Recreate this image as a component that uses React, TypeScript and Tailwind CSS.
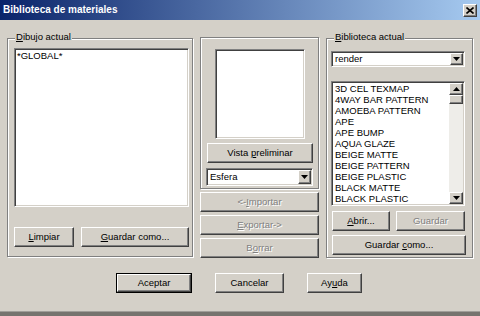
import React from "react";

const raised =
  "border border-t-white border-l-white border-r-[#404040] border-b-[#404040] shadow-[inset_-1px_-1px_0_#808080,inset_1px_1px_0_#d4d0c8] bg-[#d4d0c8]";
const sunken =
  "border border-t-[#808080] border-l-[#808080] border-r-white border-b-white shadow-[inset_1px_1px_0_#404040,inset_-1px_-1px_0_#d4d0c8]";
const etched = "border border-[#808080] shadow-[inset_1px_1px_0_#fff,1px_1px_0_#fff]";

function U({ children }: { children: React.ReactNode }) {
  return <span className="underline underline-offset-[1px]">{children}</span>;
}

function Btn({
  children,
  className = "",
  disabled = false,
}: {
  children: React.ReactNode;
  className?: string;
  disabled?: boolean;
}) {
  return (
    <div
      className={`${raised} flex items-center justify-center ${
        disabled ? "text-[#808080] [text-shadow:1px_1px_0_#fff]" : "text-black"
      } ${className}`}
    >
      <span className="whitespace-pre leading-none">{children}</span>
    </div>
  );
}

function DownTri() {
  return (
    <svg width="7" height="4" viewBox="0 0 7 4">
      <path d="M0 0h7L3.5 4z" fill="#000" />
    </svg>
  );
}
function UpTri() {
  return (
    <svg width="7" height="4" viewBox="0 0 7 4">
      <path d="M0 4h7L3.5 0z" fill="#000" />
    </svg>
  );
}

function Combo({ value, className = "" }: { value: string; className?: string }) {
  return (
    <div className={`${sunken} bg-white flex items-stretch p-[1px] ${className}`}>
      <div className="flex-1 flex items-center pl-[2px] leading-none">
        <span>{value}</span>
      </div>
      <div className={`${raised} w-[13px] flex items-center justify-center`}>
        <DownTri />
      </div>
    </div>
  );
}

function Group({
  label,
  className = "",
  children,
}: {
  label?: React.ReactNode;
  className?: string;
  children: React.ReactNode;
}) {
  return (
    <div className={`relative ${etched} ${className}`}>
      {label && (
        <div className="absolute -top-[7px] left-[7px] bg-[#d4d0c8] px-[1px] leading-none">{label}</div>
      )}
      {children}
    </div>
  );
}

const items = [
  "3D CEL TEXMAP",
  "4WAY BAR PATTERN",
  "AMOEBA PATTERN",
  "APE",
  "APE BUMP",
  "AQUA GLAZE",
  "BEIGE MATTE",
  "BEIGE PATTERN",
  "BEIGE PLASTIC",
  "BLACK MATTE",
  "BLACK PLASTIC",
];

export default function App() {
  return (
    <div className="w-[480px] h-[316px] bg-[#d4d0c8] overflow-hidden flex flex-col font-['Liberation_Sans',Arial,sans-serif] text-[9.5px] text-black">
      {/* Title bar */}
      <div className="h-[20px] shrink-0 bg-[linear-gradient(to_right,#0a246a,#a6caf0)] flex items-center justify-between pl-[3px] pr-[3px]">
        <span className="text-white font-bold text-[10px] leading-none">Biblioteca de materiales</span>
        <div className={`${raised} w-[14px] h-[13px] flex items-center justify-center`}>
          <svg width="8" height="7" viewBox="0 0 8 7">
            <path d="M0.5 0.5L7.5 6.5M7.5 0.5L0.5 6.5" stroke="#000" strokeWidth="1.6" />
          </svg>
        </div>
      </div>

      {/* Body */}
      <div className="h-[238px] shrink-0 flex items-start pt-[17px]">
        {/* Left group */}
        <Group
          className="ml-[7px] mt-[1px] w-[186px] h-[219px] flex flex-col"
          label={
            <>
              <U>D</U>ibujo actual
            </>
          }
        >
          <div className={`${sunken} bg-white ml-[6px] mt-[9px] w-[175px] h-[159px] px-[2px] pt-[1px] leading-[11px]`}>
            *GLOBAL*
          </div>
          <div className="flex ml-[6px] mt-[20px] gap-[7px]">
            <Btn className="w-[60px] h-[20px]">
              <U>L</U>impiar
            </Btn>
            <Btn className="w-[108px] h-[20px]">
              <U>G</U>uardar como...
            </Btn>
          </div>
        </Group>

        {/* Middle column */}
        <div className="ml-[7px] w-[119px] flex flex-col">
          <Group className="h-[152px] flex flex-col">
            <div className={`${sunken} bg-white ml-[14px] mt-[11px] w-[90px] h-[90px]`} />
            <Btn className="ml-[6px] mt-[4px] w-[106px] h-[20px]">
              Vista <U>p</U>reliminar
            </Btn>
            <Combo value="Esfera" className="ml-[5px] mt-[5px] w-[107px] h-[18px]" />
          </Group>
          <Btn disabled className="mt-[3px] w-[119px] h-[20px]">
            &lt;-<U>I</U>mportar
          </Btn>
          <Btn disabled className="mt-[3px] w-[119px] h-[20px]">
            <U>E</U>xportar-&gt;
          </Btn>
          <Btn disabled className="mt-[3px] w-[119px] h-[20px]">
            B<U>o</U>rrar
          </Btn>
        </div>

        {/* Right group */}
        <Group
          className="ml-[7px] mt-[1px] w-[147px] h-[220px] flex flex-col"
          label={
            <>
              <U>B</U>iblioteca actual
            </>
          }
        >
          <Combo value="render" className="ml-[4px] mt-[12px] w-[134px] h-[16px]" />
          <div className={`${sunken} bg-white ml-[4px] mt-[14px] w-[134px] h-[125px] flex p-[1px]`}>
            <div className="flex-1 pl-[2px] leading-[11px] overflow-hidden">
              {items.map((t) => (
                <div key={t} className="h-[11px] whitespace-nowrap">
                  {t}
                </div>
              ))}
            </div>
            <div className="w-[14px] flex flex-col bg-[#eeede9]">
              <div className={`${raised} h-[12px] flex items-center justify-center`}>
                <UpTri />
              </div>
              <div className={`${raised} h-[9px]`} />
              <div className="flex-1" />
              <div className={`${raised} h-[12px] flex items-center justify-center`}>
                <DownTri />
              </div>
            </div>
          </div>
          <div className="flex ml-[5px] mt-[5px] gap-[6px]">
            <Btn className="w-[58px] h-[20px]">
              <U>A</U>brir...
            </Btn>
            <Btn disabled className="w-[69px] h-[20px]">
              Guardar
            </Btn>
          </div>
          <Btn className="ml-[5px] mt-[4px] w-[134px] h-[20px]">
            Guardar <U>c</U>omo...
          </Btn>
        </Group>
      </div>

      {/* Bottom buttons */}
      <div className="flex mt-[15px] pl-[116px] gap-[23px]">
        <div className="border border-black w-[76px] h-[20px] flex">
          <Btn className="flex-1">Aceptar</Btn>
        </div>
        <Btn className="w-[69px] h-[20px]">Cancelar</Btn>
        <Btn className="w-[55px] h-[20px]">
          Ay<U>u</U>da
        </Btn>
      </div>

      <div className="mt-auto h-[5px] border-t border-t-[#a09e99] bg-[#76746f]" />
    </div>
  );
}
